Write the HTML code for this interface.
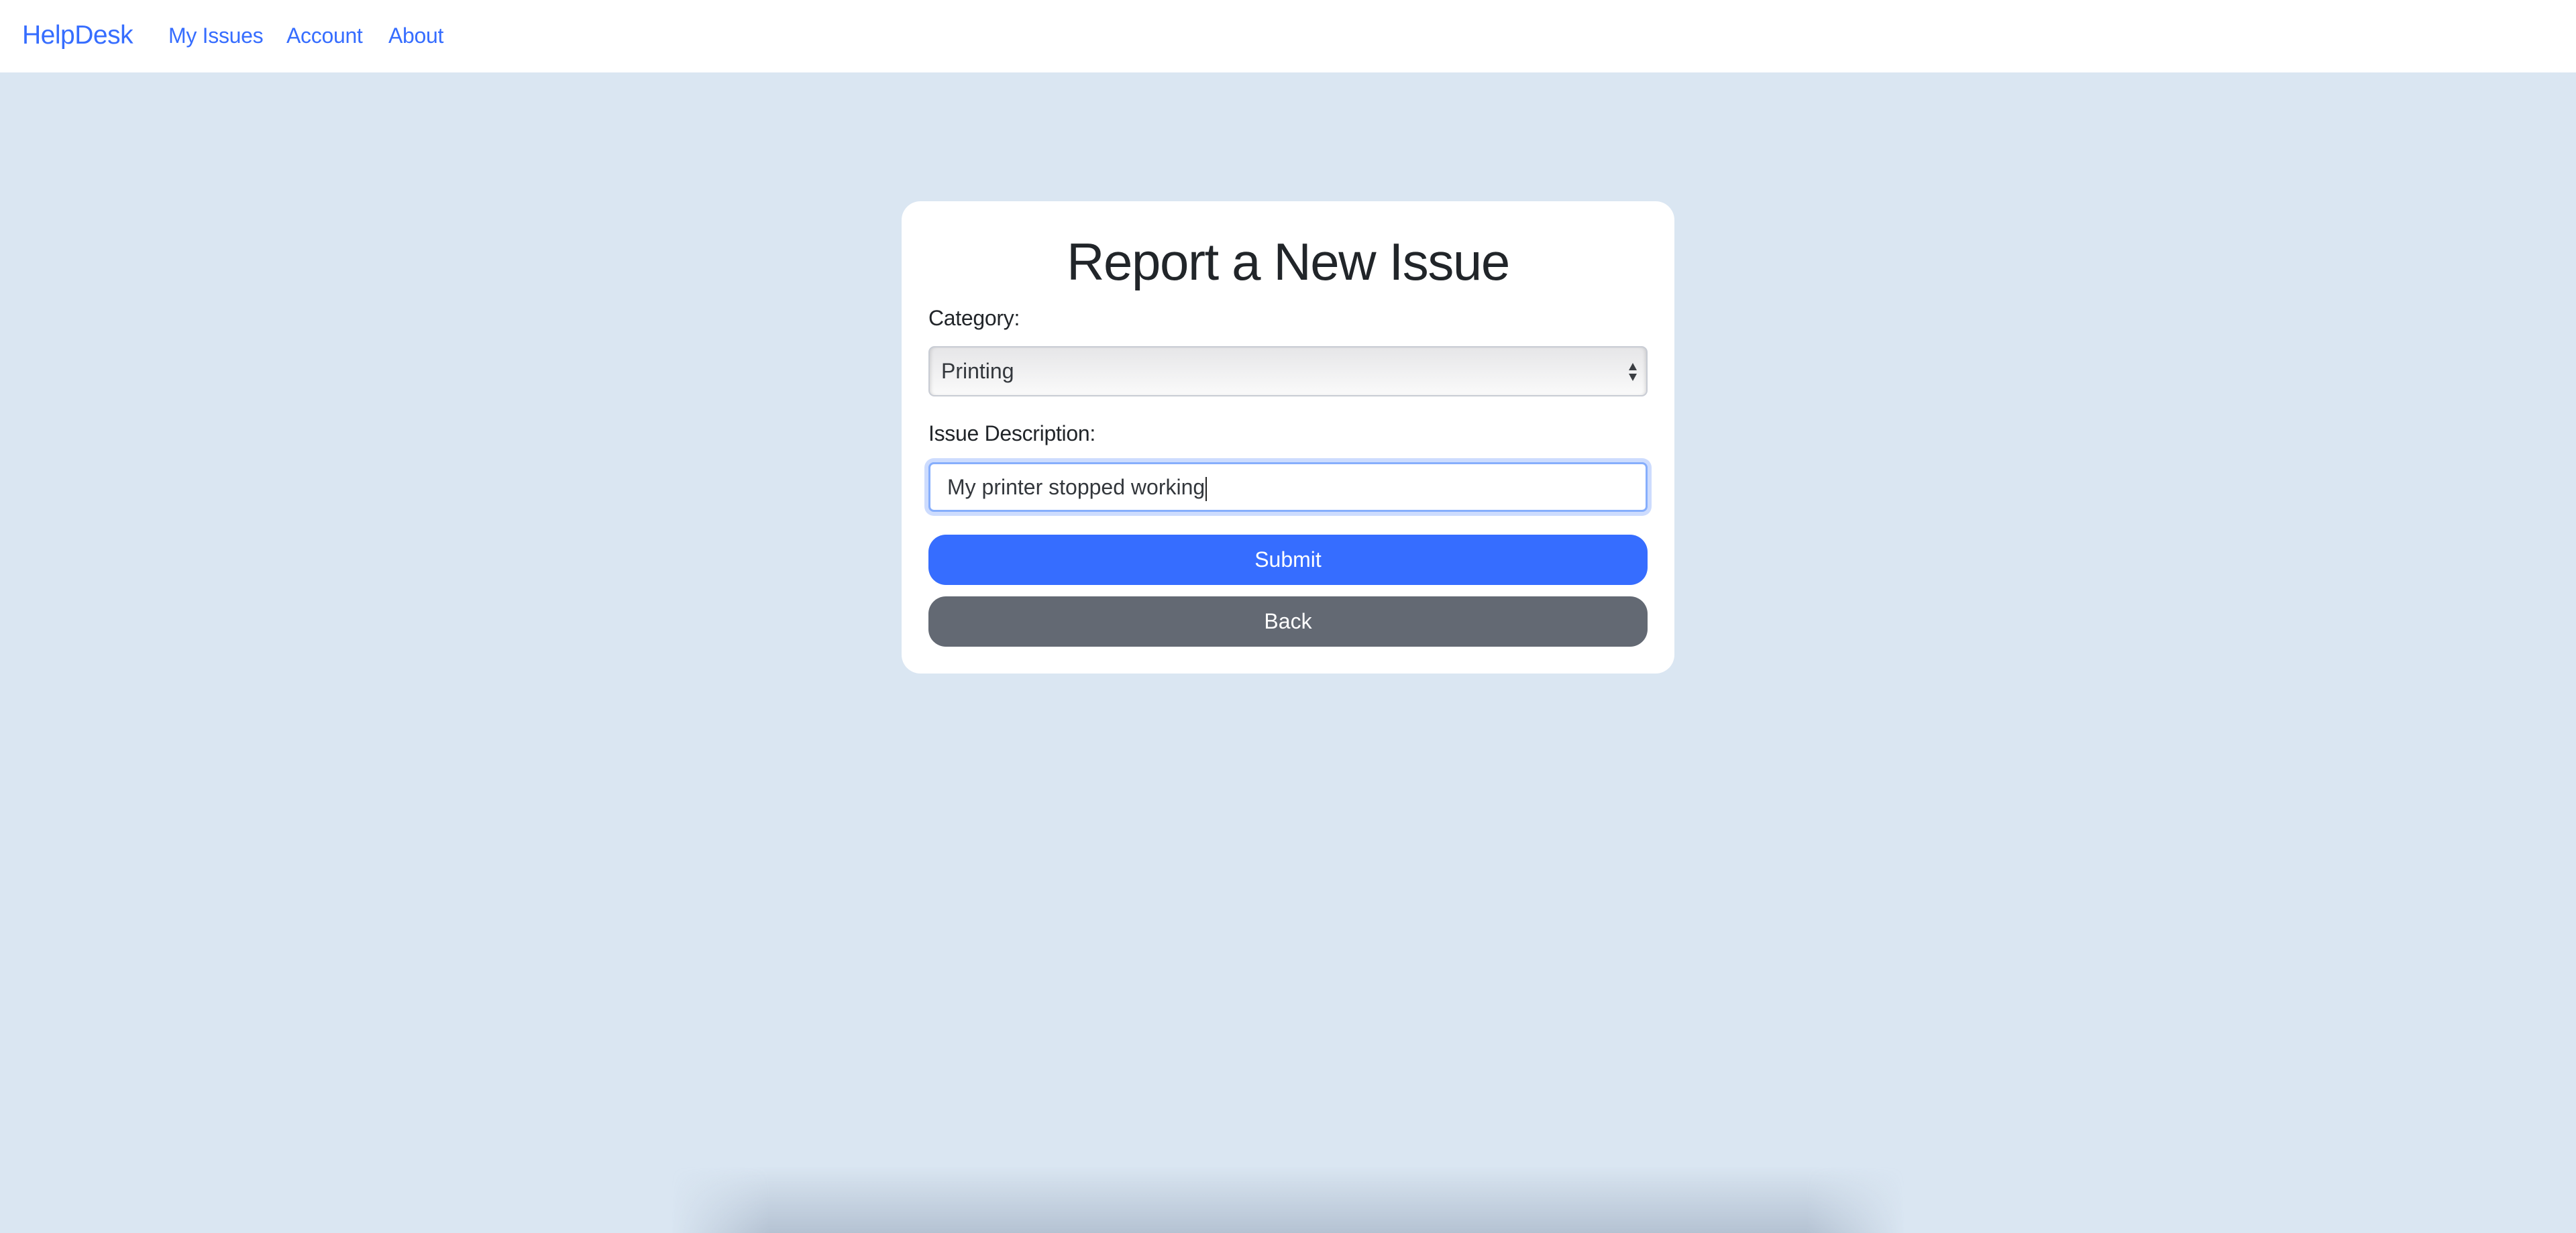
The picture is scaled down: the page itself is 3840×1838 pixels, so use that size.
<!DOCTYPE html>
<html><head><meta charset="utf-8"><style>
*{box-sizing:border-box;margin:0;padding:0}
html,body{width:3840px;height:1838px;overflow:hidden}
body{background:#dae6f2;font-family:"Liberation Sans",sans-serif;position:relative}
.nav{position:absolute;left:0;top:0;width:3840px;height:108px;background:#fff}
.nav a{position:absolute;color:#366dff;text-decoration:none;top:0;line-height:106px}
.brand{left:33px;font-size:39px;letter-spacing:-0.5px}
.l{font-size:32px;letter-spacing:-0.3px}
.card{position:absolute;left:1344px;top:300px;width:1152px;height:704px;background:#fff;border-radius:28px}
h1{position:absolute;left:0;width:100%;text-align:center;top:340px;font-size:78px;font-weight:normal;color:#212529;letter-spacing:-1.4px;line-height:100px}
.lab{position:absolute;left:1384px;font-size:32px;color:#212529;letter-spacing:-0.3px}
.sel{position:absolute;left:1384px;top:516px;width:1072px;height:75px;border:2px solid #c8ccd4;border-radius:9px;background:linear-gradient(#e6e6e8,#fafafa);box-shadow:inset 4px 0 6px -3px rgba(0,0,0,.15),inset -4px 0 6px -3px rgba(0,0,0,.15)}
.sel span{position:absolute;left:17px;top:0;line-height:71px;font-size:32px;color:#33373c}
.inp{position:absolute;left:1384px;top:689px;width:1072px;height:74px;border:3px solid #86aefc;border-radius:8px;background:#fff;box-shadow:0 0 0 6px #cddcfe}
.inp span{position:absolute;left:25px;top:0;line-height:68px;font-size:32px;color:#33373c}
.btn{position:absolute;left:1384px;width:1072px;height:75px;border-radius:26px;color:#fff;text-align:center;line-height:75px;font-size:32px}
.shadow{position:absolute;left:1000px;top:1738px;width:1840px;height:100px;background:linear-gradient(rgba(150,165,185,0),rgba(150,165,185,.55));-webkit-mask-image:linear-gradient(90deg,transparent,#000 8%,#000 92%,transparent);mask-image:linear-gradient(90deg,transparent,#000 8%,#000 92%,transparent)}
</style></head><body>
<div class="nav">
<a class="brand">HelpDesk</a>
<a class="l" style="left:251px">My Issues</a>
<a class="l" style="left:427px">Account</a>
<a class="l" style="left:579px">About</a>
</div>
<div class="card"></div>
<h1>Report a New Issue</h1>
<div class="lab" style="top:456px">Category:</div>
<div class="sel"><span>Printing</span>
<svg style="position:absolute;right:12px;top:22px" width="16" height="30" viewBox="0 0 16 30"><path d="M8 1L14 12H2Z M2 17H14L8 28Z" fill="#3a3d42"/></svg></div>
<div class="lab" style="top:628px">Issue Description:</div>
<div class="inp"><span>My printer stopped working<span style="position:static;display:inline-block;width:2px;height:36px;background:#222;vertical-align:middle;margin-left:1px"></span></span></div>
<div class="btn" style="top:797px;background:#366dff">Submit</div>
<div class="btn" style="top:889px;background:#636973">Back</div>
<div class="shadow"></div>
</body></html>
